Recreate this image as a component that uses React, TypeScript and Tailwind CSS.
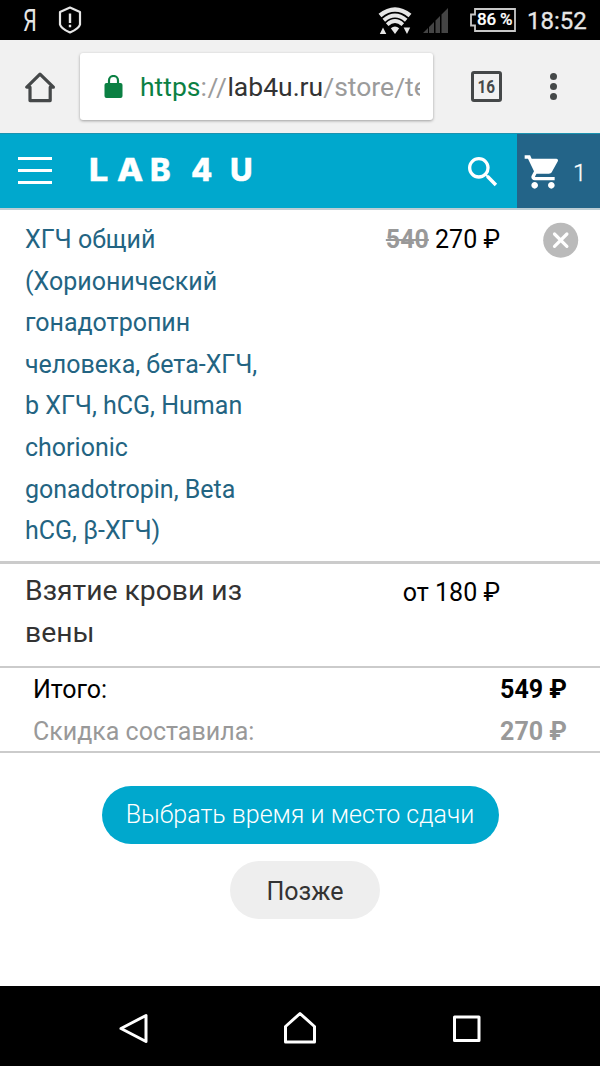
import type { ReactNode } from "react";
import { MdSearch, MdShoppingCart } from "react-icons/md";

function StatusBar() {
  return (
    <div className="flex h-10 shrink-0 items-center bg-black text-[#e6e6e6]">
      <span className="ml-[23px] w-4 text-[32px] leading-10">
        <span className="inline-block origin-left scale-x-[0.68] font-normal">Я</span>
      </span>
      <svg className="ml-[19px] h-7 w-6" viewBox="0 0 24 28" fill="none" stroke="currentColor" strokeWidth="2.2" strokeLinejoin="round">
        <path d="M12 1.5 22 6v12.500q-1 4-10 8-9-4-10-8V6Z" />
        <path d="M12 7.500v9.500M12 18.800v2.400" strokeWidth="2.400" />
      </svg>
      <svg className="ml-auto h-[29px] w-[34px]" viewBox="0 0 34 29" fill="none" stroke="currentColor">
        <path d="M2 9.500Q17-2.500 32 9.500" strokeWidth="4.600" />
        <path d="M5.800 14.200Q17 4.800 28.200 14.200" strokeWidth="4" />
        <path d="M9.200 18.600Q17 11.600 24.800 18.600" strokeWidth="3.800" />
        <path d="M12.800 22.300Q17 18.500 21.200 22.300L17 28Z" fill="currentColor" stroke="none" />
        <path d="M5 21.500 8.300 28H1.800ZM29 28 25.600 21.500h6.600Z" fill="currentColor" stroke="none" />
      </svg>
      <svg className="ml-[11px] h-[26px] w-[26px]" viewBox="0 0 26 26" fill="#444">
        <path d="M0 26 5 21V26ZM6 20 11 15V26H6ZM12.500 13.500 17 9V26H12.500ZM18.500 7.500 25 1V26H18.500Z" />
      </svg>
      <div className="relative ml-[21px] h-6 w-[46px]">
        <svg className="absolute inset-0 h-6 w-[46px]" viewBox="0 0 46 24" fill="none" stroke="#c8c8c8" strokeWidth="1.800">
          <path d="M5 1H45V23H5V17.500H1V6.500H5Z" />
        </svg>
        <span className="relative block pl-[7px] text-[17px] leading-[23px] font-medium tracking-[-0.200px] whitespace-nowrap text-white [-webkit-text-stroke:0.2px_white]">
          86 %
        </span>
      </div>
      <span className="mr-[14px] ml-[11px] w-[59px] pt-px text-[24px] leading-10 font-normal whitespace-nowrap [-webkit-text-stroke:0.3px_#e6e6e6]">18:52</span>
    </div>
  );
}

function BrowserBar() {
  return (
    <div className="flex h-[93px] shrink-0 items-center bg-[#f1f1f1] text-[#454849]">
      <svg className="ml-[25px] h-8 w-[30px]" viewBox="0 0 30 32" fill="none" stroke="currentColor" strokeWidth="3.2" strokeLinejoin="round">
        <path d="M15 3.200 1.800 16.200H5V29.600H25.200V16.200H28.400Z" />
      </svg>
      <div className="ml-[25px] flex h-[67px] w-[353px] items-center rounded-[3px] bg-white shadow-[0_1px_3px_rgba(0,0,0,0.35)]">
        <svg className="ml-[24px] h-6 w-[19px] shrink-0" viewBox="0 0 19 24" fill="#0b8043">
          <rect x="0.500" y="8" width="18" height="15" rx="2" />
          <path d="M5 9V5.500a4.500 4.500 0 0 1 9 0v3.500" fill="none" stroke="#0b8043" strokeWidth="2.200" />
        </svg>
        <div className="ml-[17px] w-[280px] overflow-hidden text-[26.500px] leading-9 whitespace-nowrap text-[#9b9b9b]">
          <span className="text-[#0b8043]">https</span>
          <span className="tracking-[0.500px]">://</span>
          <span className="text-[#333]">lab4u.ru</span>/store/te
        </div>
      </div>
      <div className="ml-[38px] flex h-[31px] w-[31px] items-center justify-center rounded-[3px] border-3 border-[#454849] text-[18px] font-bold">
        <span className="scale-x-[0.85]">16</span>
      </div>
      <div className="ml-[48px] flex flex-col gap-[3px]">
        <span className="size-[7px] rounded-full bg-[#454849]" />
        <span className="size-[7px] rounded-full bg-[#454849]" />
        <span className="size-[7px] rounded-full bg-[#454849]" />
      </div>
    </div>
  );
}

function SiteHeader() {
  return (
    <div className="flex h-[77px] shrink-0 items-stretch border-t border-b-2 border-t-[#1b93b0] border-b-[#bccdd4] bg-[#00a8cd] text-white">
      <div className="ml-[18px] flex w-[34px] flex-col justify-center gap-[9px] pb-[2px]">
        <span className="h-[3px] bg-white" />
        <span className="h-[3px] bg-white" />
        <span className="h-[3px] bg-white" />
      </div>
      <div className="ml-[37px] flex items-center pb-1 font-['Inter',sans-serif] text-[31px] leading-none font-extrabold [-webkit-text-stroke:0.4px_white]">
        <span className="w-[28px] origin-left scale-x-110">L</span>
        <span className="w-[33px] origin-left scale-x-110">A</span>
        <span className="w-[41px]">B</span>
        <span className="w-[39px]">4</span>
        <span>U</span>
      </div>
      <MdSearch className="mt-[18px] mr-[14px] ml-auto size-10" />
      <div className="flex w-[83px] bg-[#236488]">
        <MdShoppingCart className="mt-[18px] ml-[6px] size-10" />
        <span className="ml-[10px] self-center pt-[5px] text-[24px] font-light [-webkit-text-stroke:0.3px_white]">1</span>
      </div>
    </div>
  );
}

function Total({ label, children, className }: { label: string; children: ReactNode; className: string }) {
  return (
    <div className={`flex justify-between ${className}`}>
      <span>{label}</span>
      <b className="font-bold">{children}</b>
    </div>
  );
}

const testName = [
  "ХГЧ общий",
  "(Хорионический",
  "гонадотропин",
  "человека, бета-ХГЧ,",
  "b ХГЧ, hCG, Human",
  "chorionic",
  "gonadotropin, Beta",
  "hCG, β-ХГЧ)",
];

export default function App() {
  return (
    <div className="flex h-[1066px] w-[600px] flex-col overflow-hidden bg-white font-[Roboto,sans-serif] text-[25px] leading-[41.600px] text-black">
      <StatusBar />
      <BrowserBar />
      <SiteHeader />

      <div className="flex h-[354px] shrink-0 border-b-3 border-[#cbcbcb] pt-[9px] pl-[25px]">
        <div className="w-[245px] whitespace-nowrap text-[#236482]">
          {testName.map((line) => (
            <div key={line}>{line}</div>
          ))}
        </div>
        <div className="w-[230px] text-right whitespace-nowrap">
          <s className="font-bold text-[#999]">540</s> 270 ₽
        </div>
        <svg className="mt-[3px] ml-[43px] size-9" viewBox="0 0 36 36">
          <circle cx="17.700" cy="18.200" r="17.500" fill="#bababa" />
          <path d="m11.500 12 12.400 12.400m0-12.400-12.400 12.400" stroke="#fff" strokeWidth="3.200" strokeLinecap="round" />
        </svg>
      </div>

      <div className="flex h-[104px] shrink-0 border-b-2 border-[#cbcbcb] pt-[6px] pl-[25px]">
        <div className="w-[245px] text-[28.300px] text-[#333]">Взятие крови из вены</div>
        <div className="w-[230px] pt-[2px] text-right">от 180 ₽</div>
      </div>

      <div className="h-[85px] shrink-0 border-b-2 border-[#cbcbcb] pt-px pr-[33px] pl-[33px]">
        <Total label="Итого:" className="text-black">549 ₽</Total>
        <Total label="Скидка составила:" className="text-[#999]">270 ₽</Total>
      </div>

      <div className="flex flex-col items-center pt-[33px]">
        <button className="h-[58px] w-[397px] rounded-full bg-[#00a8cd] font-light whitespace-nowrap text-white">
          Выбрать время и место сдачи
        </button>
        <button className="mt-[17px] ml-[10px] h-[58px] w-[150px] rounded-full bg-[#eee] pt-[3px] text-[#333]">Позже</button>
      </div>

      <div className="mt-auto flex h-20 shrink-0 items-center bg-black pt-[3px]">
        <svg className="ml-[118px] h-9 w-8" viewBox="0 0 32 36" fill="none" stroke="#fff" strokeWidth="3" strokeLinejoin="round">
          <path d="M28 5.500V31.500L3 18.500Z" />
        </svg>
        <svg className="ml-[132px] h-9 w-9" viewBox="0 0 36 36" fill="none" stroke="#fff" strokeWidth="3" strokeLinejoin="round">
          <path d="M3.500 32V16.500L18 3.500 32.500 16.500V32Z" />
        </svg>
        <svg className="ml-[134px] h-9 w-8" viewBox="0 0 32 36" fill="none" stroke="#fff" strokeWidth="3" strokeLinejoin="round">
          <path d="M2.500 7H27V30.500H2.500Z" />
        </svg>
      </div>
    </div>
  );
}
